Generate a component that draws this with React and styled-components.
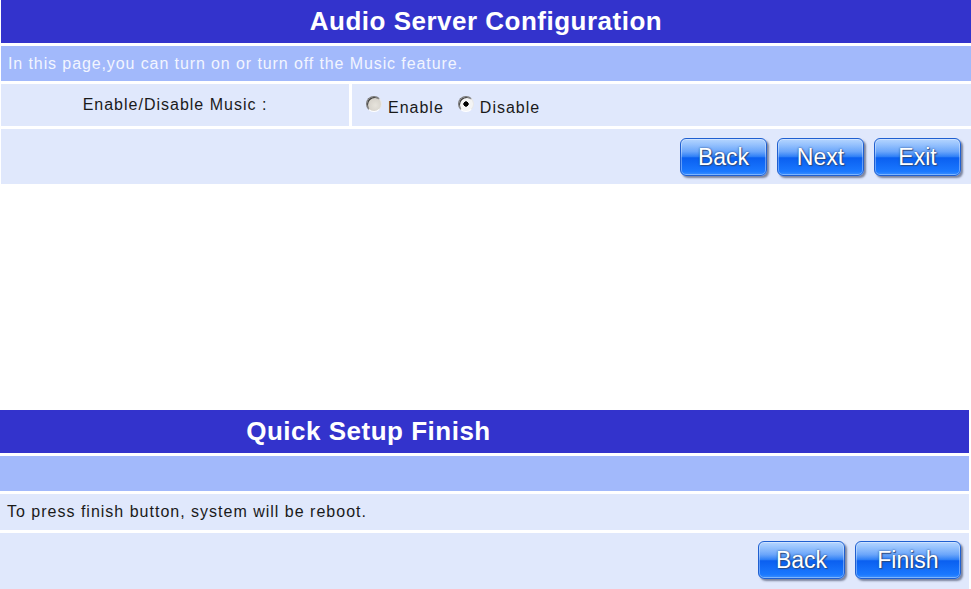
import React from "react";
import styled, { createGlobalStyle } from "styled-components";

const Global = createGlobalStyle`
  html, body { margin: 0; padding: 0; background: #ffffff; overflow: hidden; }
  body { font-family: "Liberation Sans", Arial, sans-serif; }
`;

const Page = styled.div`
  display: flex;
  flex-direction: column;
  width: 971px;
`;

const Panel = styled.section`
  display: flex;
  flex-direction: column;
  gap: 3px;
  width: ${(p) => p.$width}px;
  margin-left: ${(p) => p.$left || 0}px;
  margin-top: ${(p) => p.$top || 0}px;
`;

const Header = styled.div`
  height: 43px;
  background: #3333cc;
  color: #ffffff;
  font-weight: bold;
  font-size: 26px;
  display: flex;
  align-items: center;
  justify-content: center;
  padding-right: ${(p) => p.$shift || 0}px;
  letter-spacing: 0.5px;
`;

const Desc = styled.div`
  height: 35px;
  background: #a2b9fb;
  color: #f2f5ff;
  font-size: 16px;
  letter-spacing: 0.9px;
  display: flex;
  align-items: center;
  padding-left: 7px;
`;

const Row = styled.div`
  height: ${(p) => p.$h}px;
  display: flex;
  gap: 3px;
`;

const Cell = styled.div`
  background: #e0e8fc;
  color: #1a1a1a;
  font-size: 16px;
  letter-spacing: 1px;
  display: flex;
  align-items: center;
  justify-content: ${(p) => (p.$center ? "center" : "flex-start")};
  width: ${(p) => (p.$w ? `${p.$w}px` : "auto")};
  flex: ${(p) => (p.$w ? "none" : "1")};
  padding-left: ${(p) => p.$pl || 0}px;
`;

const Radios = styled.div`
  display: flex;
  align-items: center;
  margin-left: 14px;
  margin-top: 5px;
`;

const RadioLabel = styled.label`
  display: flex;
  align-items: center;
  gap: 6px;
  margin-right: 14px;
  font-size: 16px;
  letter-spacing: 1px;
  color: #1a1a1a;
`;

const RadioDot = styled.span`
  width: 16px;
  height: 16px;
  border-radius: 50%;
  box-sizing: border-box;
  border: 1px solid;
  border-color: #7a7a7a #e8e8e8 #ffffff #7a7a7a;
  background: ${(p) =>
    p.$checked
      ? "radial-gradient(circle at 50% 50%, #000 0 2.4px, #f4f4f4 2.9px)"
      : "radial-gradient(circle at 60% 60%, #e6e3dc 0, #d4d0c8 70%)"};
  box-shadow: inset 1px 1px 0 #404040;
  margin-top: -8px;
`;

const ButtonBar = styled.div`
  height: ${(p) => p.$h}px;
  background: #e0e8fc;
  display: flex;
  justify-content: flex-end;
  align-items: flex-start;
  gap: 10px;
  padding-top: ${(p) => p.$pt}px;
  padding-right: ${(p) => p.$pr}px;
  box-sizing: border-box;
`;

const GlossButton = styled.button`
  width: ${(p) => p.$w}px;
  height: 38px;
  border-radius: 6px;
  border: 1px solid #1f5fd0;
  background:
    linear-gradient(to bottom,
      rgba(255,255,255,0.55) 0%,
      rgba(255,255,255,0.25) 35%,
      rgba(255,255,255,0) 50%),
    linear-gradient(to bottom, #5aa2ff 0%, #2a7cf6 50%, #0a5ff0 52%, #1a78ff 90%, #3c90ff 100%);
  box-shadow: 2px 2px 2px rgba(40, 50, 80, 0.55), inset 0 0 0 1px rgba(255,255,255,0.35);
  color: #ffffff;
  font-family: "Liberation Sans", Arial, sans-serif;
  font-size: 23px;
  line-height: 36px;
  padding: 0;
  text-shadow: 0 0 2px #23407a, 1px 1px 1px #2b4f8a;
  cursor: pointer;
`;

export default function App() {
  return (
    <>
      <Global />
      <Page>
        <Panel $width={970} $left={1}>
          <Header>Audio Server Configuration</Header>
          <Desc>In this page,you can turn on or turn off the Music feature.</Desc>
          <Row $h={42}>
            <Cell $w={348} $center>Enable/Disable Music :</Cell>
            <Cell>
              <Radios>
                <RadioLabel>
                  <RadioDot />
                  Enable
                </RadioLabel>
                <RadioLabel>
                  <RadioDot $checked />
                  Disable
                </RadioLabel>
              </Radios>
            </Cell>
          </Row>
          <ButtonBar $h={55} $pt={9} $pr={10}>
            <GlossButton $w={87}>Back</GlossButton>
            <GlossButton $w={87}>Next</GlossButton>
            <GlossButton $w={87}>Exit</GlossButton>
          </ButtonBar>
        </Panel>

        <Panel $width={969} $top={226}>
          <Header $shift={232}>Quick Setup Finish</Header>
          <Desc />
          <Row $h={36}>
            <Cell $pl={7}>To press finish button, system will be reboot.</Cell>
          </Row>
          <ButtonBar $h={60} $pt={8} $pr={8}>
            <GlossButton $w={87}>Back</GlossButton>
            <GlossButton $w={106}>Finish</GlossButton>
          </ButtonBar>
        </Panel>
      </Page>
    </>
  );
}
